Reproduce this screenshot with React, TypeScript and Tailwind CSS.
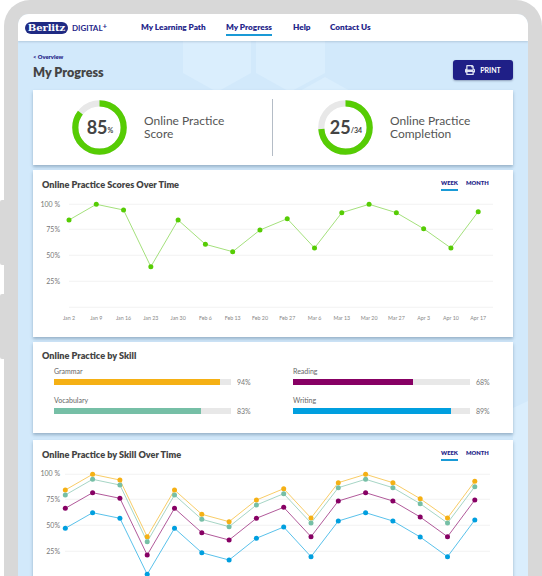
import { FaPrint } from "react-icons/fa";

const font = "font-['Lato','Liberation_Sans',sans-serif]";
const navy = "text-[#26268a]";

const dates = ["Jan 2","Jan 9","Jan 16","Jan 23","Jan 30","Feb 6","Feb 13","Feb 20","Feb 27","Mar 6","Mar 13","Mar 20","Mar 27","Apr 3","Apr 10","Apr 17"];
const x1 = dates.map((_, i) => 69 + i * 27.28);
const y1 = [220,204.3,210,266.7,220,244.3,251.7,230,218.7,248,212.7,204.3,212.7,228.7,248,211.7];
const x2 = dates.map((_, i) => 65.3 + i * 27.3);
const series = [
  { c: "#f5b014", y: [490,474.3,480,536.7,490,514.3,521.7,500,488.7,518,482.7,474.3,482.7,498.7,518,481.3] },
  { c: "#76bfa6", y: [495,479.3,485,541.7,495,519.3,526.7,505,493.7,523,487.7,479.3,487.7,503.7,523,486.7] },
  { c: "#870064", y: [508.3,492.7,498.3,555,508.3,532.7,540,518.3,507.3,536.7,501,492.7,501,517,536.7,500] },
  { c: "#009fdf", y: [528.3,512.7,518.3,574.3,528.3,552.7,560,538.3,527,556.7,521,512.7,521,537,556.7,520] },
];

function Ring({ pct, children }: { pct: number; children: React.ReactNode }) {
  const r = 24.2;
  const c = 2 * Math.PI * r;
  return (
    <div className="relative w-[55px] h-[55px] shrink-0">
      <svg width="55" height="55" viewBox="0 0 55 55" className="block -rotate-90">
        <circle cx="27.5" cy="27.5" r={r} fill="none" stroke="#e8e8e8" strokeWidth="6.2" />
        <circle cx="27.5" cy="27.5" r={r} fill="none" stroke="#56cc04" strokeWidth="6.2" strokeDasharray={`${c * pct} ${c}`} />
      </svg>
      <div className="absolute inset-0 flex items-center justify-center pl-[1px] font-bold text-[#444]">{children}</div>
    </div>
  );
}

function Tabs() {
  return (
    <div className={`flex gap-[8px] text-[5.8px] leading-[8px] font-extrabold ${navy}`}>
      <span className="border-b-2 border-[#1a9ad6] pb-[2px] w-[17px] whitespace-nowrap">WEEK</span>
      <span className="w-[22px] whitespace-nowrap">MONTH</span>
    </div>
  );
}

function CardHead({ title }: { title: string }) {
  return (
    <div className="flex justify-between items-start h-[25px] pl-[9px] pr-[25px] pt-[8px]">
      <h2 className="text-[9.1px] leading-[13px] font-extrabold text-[#444]">{title}</h2>
      <div className="pt-[1px]"><Tabs /></div>
    </div>
  );
}

function Bar({ label, pct, w, color }: { label: string; pct: string; w: number; color: string }) {
  return (
    <div className="w-[205px]">
      <div className="text-[7px] leading-[10px] text-[#666]">{label}</div>
      <div className="flex items-center gap-[6px] mt-[3px]">
        <div className="w-[177px] h-[5.5px] bg-[#e8e8e8]">
          <div className="h-full" style={{ width: `${w}%`, backgroundColor: color }} />
        </div>
        <span className="text-[7px] leading-[6px] text-[#777]">{pct}</span>
      </div>
    </div>
  );
}

function YLabels({ ys }: { ys: number[] }) {
  const labels = ["100 %", "75%", "50%", "25%"];
  return (
    <>
      {labels.map((l, i) => (
        <text key={l} x="60" y={ys[i] + 2.3} textAnchor="end" fontSize="7" fill="#777">{l}</text>
      ))}
    </>
  );
}

export default function App() {
  return (
    <div className={`relative w-[542px] h-[576px] overflow-hidden bg-white ${font}`}>
      <div className="absolute left-0 top-[200px] w-[6px] h-[65px] bg-[#d8d8d8] rounded-l-[2px]" />
      <div className="absolute left-0 top-[294px] w-[6px] h-[65px] bg-[#d8d8d8] rounded-l-[2px]" />
      <div className="relative ml-[4px] w-[538px] h-[590px] bg-[#d8d8d8] rounded-t-[26px] pt-[14px] pl-[14px] pr-[14px]">
        <div className="relative w-[510px] h-[576px] rounded-t-[11px] overflow-hidden bg-[#d2e9fb]">
          <svg className="absolute left-0 top-0" width="510" height="576" viewBox="18 14 510 576">
            <g fill="#daeefd">
              <polygon points="217,14 251,34 251,73 217,92 183,73 183,34" />
              <polygon points="290,14 325,34 325,73 290,92 256,73 256,34" />
              <polygon points="325,77 359,96 359,135 325,155 291,135 291,96" />
              <polygon points="513,408 528,401 528,590 513,590" />
            </g>
          </svg>
          <header className="relative flex items-center h-[27px] bg-white shadow-[0_1px_2px_rgba(120,140,160,0.35)] pl-[7px]">
            <div className="flex items-center w-[116px]">
              <span className="flex items-center justify-center w-[43px] h-[12px] rounded-[6px] bg-[#1f2a83] text-white text-[10px] font-bold font-['DejaVu_Serif',serif] tracking-[-0.1px]">Berlitz</span>
              <span className={`ml-[4px] text-[8px] font-bold ${navy}`}>DIGITAL<sup className="text-[8px] -top-[2px]">+</sup></span>
            </div>
            <nav className={`flex text-[8.2px] font-extrabold ${navy}`}>
              <span className="w-[85px]">My Learning Path</span>
              <span className="w-[67px] relative">My Progress<span className="absolute left-0 top-[13px] h-[2px] w-[46px] bg-[#1a9ad6]" /></span>
              <span className="w-[37px]">Help</span>
              <span>Contact Us</span>
            </nav>
          </header>
          <main className="relative px-[15px]">
            <div className="flex justify-between h-[49px]">
              <div className="pt-[12px]">
                <div className={`text-[5.8px] leading-[8px] font-extrabold ${navy}`}>&lt; Overview</div>
                <h1 className="mt-[2px] text-[12.6px] leading-[20px] font-extrabold text-[#444]">My Progress</h1>
              </div>
              <button className="mt-[19px] flex items-center justify-center gap-[5px] w-[60px] h-[20px] rounded-[3px] bg-[#1f1f87] text-white text-[7px] font-bold shadow-[0_1px_2px_rgba(40,50,90,0.4)]">
                <FaPrint className="w-[10px] h-[10px] text-[#dfe3f2]" />
                PRINT
              </button>
            </div>

            <section className="flex h-[75px] bg-white shadow-[0_2px_3px_rgba(80,110,140,0.45)]">
              <div className="flex items-center w-[240px] pl-[39px] gap-[17px] border-r border-[#b4bcc6] my-[9px]">
                <Ring pct={0.85}>
                  <span className="text-[18px]">85</span><span className="text-[7px] mt-[6px]">%</span>
                </Ring>
                <div className="text-[12px] leading-[13px] text-[#555] pb-[2px]">Online Practice<br />Score</div>
              </div>
              <div className="flex items-center pl-[45px] gap-[17px]">
                <Ring pct={0.735}>
                  <span className="text-[18px]">25</span><span className="text-[7px] mt-[6px]">/34</span>
                </Ring>
                <div className="text-[12px] leading-[13px] text-[#555] pb-[2px]">Online Practice<br />Completion</div>
              </div>
            </section>

            <section className="mt-[5px] h-[167px] bg-white shadow-[0_2px_3px_rgba(80,110,140,0.45)]">
              <CardHead title="Online Practice Scores Over Time" />
              <svg width="480" height="142" viewBox="33 195 480 142" className="block">
                {[204.3, 229.3, 255.3, 281.3, 307.3].map((y) => (
                  <line key={y} x1="69" x2="493" y1={y} y2={y} stroke="#f0f0f0" strokeWidth="0.8" />
                ))}
                <YLabels ys={[204.3, 230, 255.5, 281.5]} />
                <polyline fill="none" stroke="#a4e07c" strokeWidth="1" points={x1.map((x, i) => `${x},${y1[i]}`).join(" ")} />
                {x1.map((x, i) => <circle key={i} cx={x} cy={y1[i]} r="2.5" fill="#56cc04" />)}
                {dates.map((d, i) => (
                  <text key={d} x={x1[i]} y="319.5" textAnchor="middle" fontSize="5.3" fill="#888">{d}</text>
                ))}
              </svg>
            </section>

            <section className="mt-[5px] h-[91px] bg-white shadow-[0_2px_3px_rgba(80,110,140,0.45)]">
              <h2 className="pl-[9px] pt-[7px] text-[9.1px] leading-[13px] font-extrabold text-[#444]">Online Practice by Skill</h2>
              <div className="grid grid-cols-[239px_205px] gap-y-[10px] pl-[21px] pt-[4px]">
                <Bar label="Grammar" pct="94%" w={94} color="#f5b014" />
                <Bar label="Reading" pct="68%" w={68} color="#870064" />
                <Bar label="Vocabulary" pct="83%" w={83} color="#76bfa6" />
                <Bar label="Writing" pct="89%" w={89} color="#009fdf" />
              </div>
            </section>

            <section className="mt-[7px] h-[160px] bg-white shadow-[0_2px_3px_rgba(80,110,140,0.45)]">
              <CardHead title="Online Practice by Skill Over Time" />
              <svg width="480" height="135" viewBox="33 465 480 135" className="block overflow-hidden">
                {[474.3, 499.3, 525.3, 551.3].map((y) => (
                  <line key={y} x1="65" x2="490" y1={y} y2={y} stroke="#f0f0f0" strokeWidth="0.8" />
                ))}
                <YLabels ys={[474, 500, 526, 552]} />
                {series.map((s) => (
                  <polyline key={s.c} fill="none" stroke={s.c} strokeOpacity="0.65" strokeWidth="1" points={x2.map((x, i) => `${x},${s.y[i]}`).join(" ")} />
                ))}
                {series.map((s) => x2.map((x, i) => <circle key={s.c + i} cx={x} cy={s.y[i]} r="2.5" fill={s.c} />))}
              </svg>
            </section>
          </main>
        </div>
      </div>
    </div>
  );
}
